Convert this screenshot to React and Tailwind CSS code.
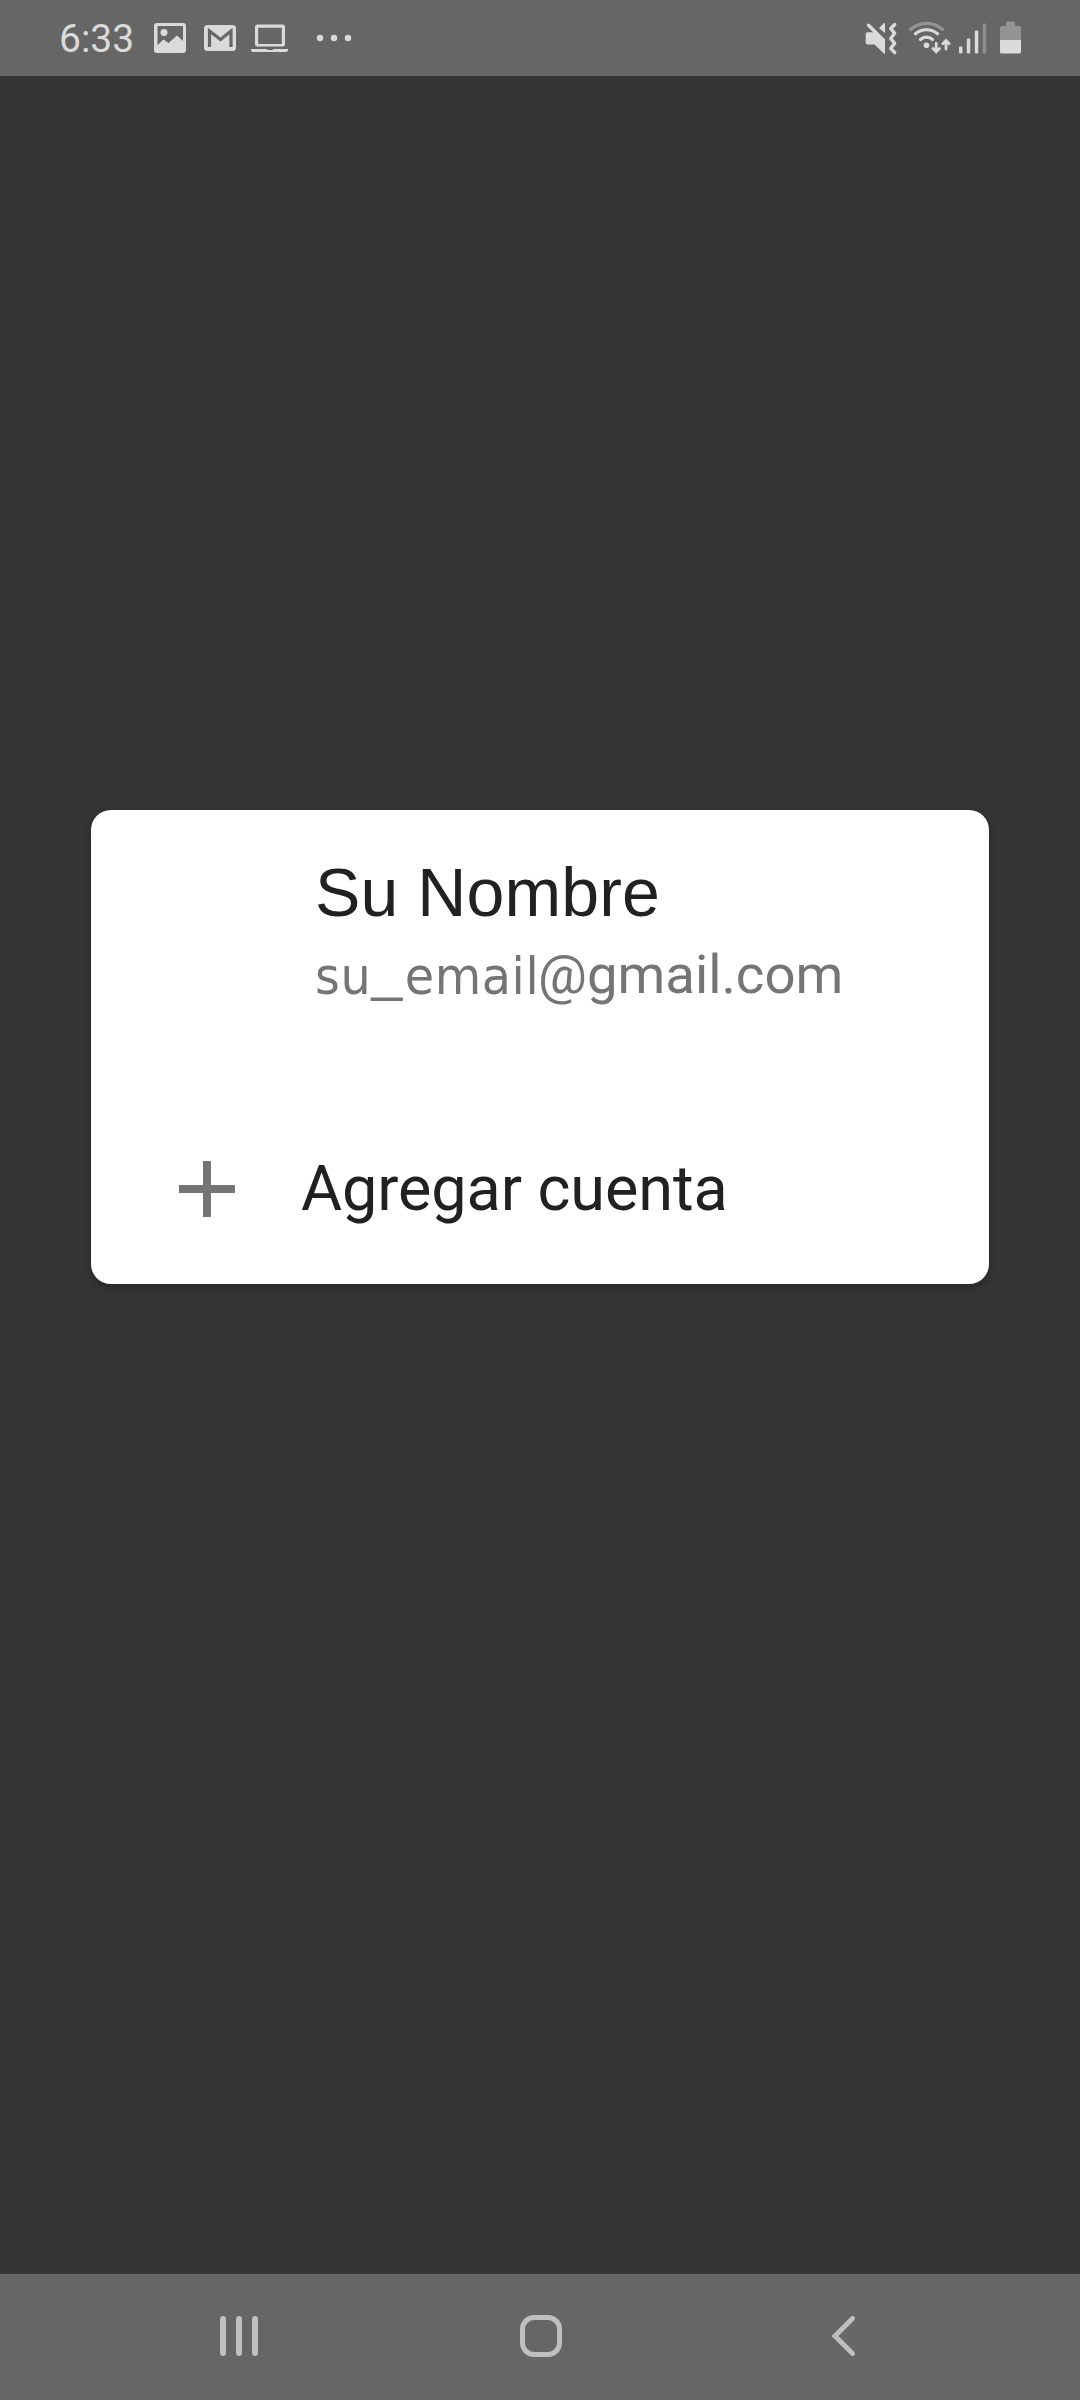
import React from "react";

const StatusBar = () => (
  <header className="flex h-[76px] w-full justify-between bg-[#666666] pl-[59px] pr-[58px] text-[#dadada]">
    <div className="flex">
      <span className="mt-px h-[76px] w-[94px] text-[39px] leading-[76px]">
        6:33
      </span>
      {/* gallery */}
      <svg width="34" height="76" viewBox="153 0 34 76" fill="currentColor">
        <path
          fillRule="evenodd"
          d="M157 23h26a3 3 0 0 1 3 3v24a3 3 0 0 1-3 3h-26a3 3 0 0 1-3-3V26a3 3 0 0 1 3-3zM157.500 26v19l6-5.500 5 3.500 8.500-7.500 6 5.500V26z"
        />
        <circle cx="164" cy="32.500" r="3.500" />
      </svg>
      {/* mail */}
      <svg
        className="ml-4"
        width="34"
        height="76"
        viewBox="203 0 34 76"
        fill="currentColor"
      >
        <rect x="204" y="25" width="32" height="26" rx="3.500" />
        <path
          d="M209.500 47V31l11 8.500 10.500-8.500v16"
          fill="none"
          stroke="#666666"
          strokeWidth="3.200"
        />
      </svg>
      {/* laptop */}
      <svg
        className="ml-3"
        width="41"
        height="76"
        viewBox="249 0 41 76"
        fill="currentColor"
      >
        <path
          fillRule="evenodd"
          d="M257.500 24.500h25a2.500 2.500 0 0 1 2.500 2.500v17a2.500 2.500 0 0 1-2.500 2.500h-25a2.500 2.500 0 0 1-2.500-2.500V27a2.500 2.500 0 0 1 2.500-2.500zM258.200 27.700v16.300h23.600V27.700z"
        />
        <path d="M251 49h15.500l1 .9h5l1-.9H288v1a2 2 0 0 1-2 2h-33a2 2 0 0 1-2-2z" />
      </svg>
      <svg
        className="ml-[26px]"
        width="36"
        height="76"
        viewBox="316 0 36 76"
        fill="currentColor"
      >
        <circle cx="320" cy="38" r="3.200" />
        <circle cx="334" cy="38" r="3.200" />
        <circle cx="348" cy="38" r="3.200" />
      </svg>
    </div>

    <div className="flex">
      {/* sound off */}
      <svg width="34" height="76" viewBox="864 0 34 76" fill="currentColor">
        <path d="M867.700 32.300h7.300l10 9v12.500h-1L874.500 44.500h-6.800a2 2 0 0 1-2-2v-8.200a2 2 0 0 1 2-2zM885 23v10.300l-6-5.300 5-5z" />
        <g
          fill="none"
          stroke="currentColor"
          strokeWidth="3.400"
          strokeLinecap="round"
          strokeLinejoin="round"
        >
          <path d="M868.500 25.300l15 15" />
          <path d="M894.700 24.500l-4 4 4 4.800-4 5.200 4 4.800-4 5.200 4 4" />
        </g>
      </svg>
      {/* wifi */}
      <svg
        className="ml-[10px]"
        width="44"
        height="76"
        viewBox="908 0 44 76"
        fill="none"
        stroke="currentColor"
        strokeWidth="3.200"
        strokeLinecap="round"
      >
        <path d="M910.500 29.500a24.200 24.200 0 0 1 32.200 0" stroke="#949494" />
        <path d="M915.500 33.800a17 17 0 0 1 22 0" />
        <path d="M920.500 39.500a9 9 0 0 1 12 0" />
        <circle
          cx="926.500"
          cy="45.300"
          r="2.800"
          fill="currentColor"
          stroke="none"
        />
        <path
          d="M936.200 43.500v8M933 48.500l3.200 3.300 3.300-3.300M946 49v-8M942.800 43.700l3.200-3.200 3.200 3.200"
          strokeWidth="2.800"
        />
      </svg>
      {/* signal */}
      <svg
        className="ml-[6px]"
        width="30"
        height="76"
        viewBox="958 0 30 76"
        fill="currentColor"
      >
        <rect x="959" y="46.500" width="3.500" height="7" rx="1" />
        <rect x="966.800" y="38.500" width="3.500" height="15" rx="1" />
        <rect x="974.800" y="30.500" width="3.500" height="23" rx="1" />
        <rect
          x="982.700"
          y="23.500"
          width="3.500"
          height="30"
          rx="1"
          fill="#8e8e8e"
        />
      </svg>
      {/* battery */}
      <svg
        className="ml-[11px]"
        width="23"
        height="76"
        viewBox="999 0 23 76"
        fill="currentColor"
      >
        <path
          d="M1006 26v-3a1.500 1.500 0 0 1 1.500-1.500h6a1.500 1.500 0 0 1 1.500 1.500v3h4.500a1.500 1.500 0 0 1 1.500 1.500V40h-21V27.500a1.500 1.500 0 0 1 1.500-1.500z"
          fill="#949494"
        />
        <path d="M1000 40h21v12a1.500 1.500 0 0 1-1.500 1.500h-18a1.500 1.500 0 0 1-1.500-1.500z" />
      </svg>
    </div>
  </header>
);

const AccountDialog = () => (
  <section className="mt-[734px] ml-[91px] flex h-[474px] w-[898px] flex-col rounded-[20px] bg-white shadow-[0_3px_8px_rgba(0,0,0,0.3)]">
    <button className="flex flex-col items-start pt-[42px] pl-[224px] text-left">
      <span className="h-[84px] font-['Liberation_Sans',sans-serif] text-[68px] leading-[80px] tracking-[0.1px] text-[#212121]">
        Su Nombre
      </span>
      <span className="flex h-[76px] items-baseline whitespace-nowrap text-[#757575]">
        <span className="w-[225px] origin-left translate-y-px scale-x-[1.04] font-['DejaVu_Sans_Condensed','DejaVu_Sans',sans-serif] text-[51px] leading-[78px] font-stretch-condensed tracking-[0.6px]">
          su
          <span className="inline-block w-[32px] origin-left -translate-y-[5px] scale-x-[1.3]">
            _
          </span>
          email
        </span>
        <span className="-ml-[2px] text-[54.5px] leading-[76px]">
          @gmail.com
        </span>
      </span>
    </button>
    <button className="mt-[122px] flex h-[110px] items-center pl-[88px] text-left">
      <svg width="56" height="56" viewBox="0 0 56 56" fill="#757575">
        <path d="M24 0h8v56h-8z" />
        <path d="M0 24h56v8H0z" />
      </svg>
      <span className="ml-[66px] text-[63px] leading-[80px] tracking-[-0.1px] whitespace-nowrap text-[#212121]">
        Agregar cuenta
      </span>
    </button>
  </section>
);

const NavigationBar = () => (
  <nav className="mt-auto flex h-[126px] items-center bg-[#666666] pb-[2px] pl-[219px] text-[#bfbfbf]">
    <svg width="40" height="44" viewBox="219 2314 40 44" fill="currentColor">
      <rect x="220" y="2316" width="6" height="40" rx="3" />
      <rect x="236" y="2316" width="6" height="40" rx="3" />
      <rect x="252" y="2316" width="6" height="40" rx="3" />
    </svg>
    <svg
      className="ml-[260px]"
      width="44"
      height="44"
      viewBox="519 2314 44 44"
      fill="none"
      stroke="currentColor"
      strokeWidth="5"
    >
      <rect x="522.500" y="2317.500" width="37" height="37" rx="11.500" />
    </svg>
    <svg
      className="ml-[267px]"
      width="28"
      height="44"
      viewBox="830 2314 28 44"
      fill="none"
      stroke="currentColor"
      strokeWidth="5"
      strokeLinecap="round"
    >
      <path d="M852.500 2318.500l-17.500 17.500 17.500 17.500" />
    </svg>
  </nav>
);

export default function App() {
  return (
    <div className="flex h-[2400px] w-[1080px] flex-col overflow-hidden bg-[#353535] font-[Roboto,sans-serif]">
      <StatusBar />
      <AccountDialog />
      <NavigationBar />
    </div>
  );
}
